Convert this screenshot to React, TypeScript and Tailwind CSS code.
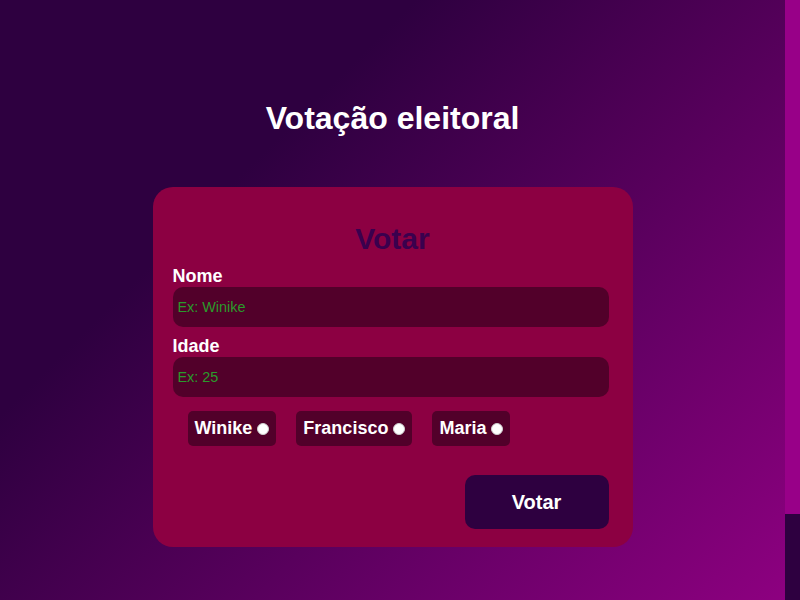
const candidates = ["Winike", "Francisco", "Maria"];

export default function App() {
  return (
    <div
      className="flex h-[600px] w-[800px] overflow-hidden"
      style={{ fontFamily: '"Liberation Sans", Arial, sans-serif' }}
    >
      <main className="flex flex-1 flex-col items-center bg-[linear-gradient(135deg,#2e0040_30%,#8d0080_100%)] pt-[100px]">
        <h1 className="text-[32px] leading-[37px] font-bold text-white">Votação eleitoral</h1>

        <form
          className="mt-[50px] flex w-[480px] flex-col rounded-[20px] bg-[#8c0042] px-[20px] pt-[35px] pb-[18px]"
          onSubmit={(e) => e.preventDefault()}
        >
          <h2 className="text-center text-[30px] leading-[34px] font-bold text-[#3a004e]">Votar</h2>

          <label className="mt-[10px] text-[18px] leading-[21px] font-bold text-white">Nome</label>
          <input
            type="text"
            placeholder="Ex: Winike"
            className="h-[40px] w-[436px] rounded-[10px] bg-[#52002a] px-[5px] text-[14.4px] text-white outline-none placeholder:text-[#2b9a2b]"
          />

          <label className="mt-[9px] text-[18px] leading-[21px] font-bold text-white">Idade</label>
          <input
            type="text"
            placeholder="Ex: 25"
            className="h-[40px] w-[436px] rounded-[10px] bg-[#52002a] px-[5px] text-[14.4px] text-white outline-none placeholder:text-[#2b9a2b]"
          />

          <div className="mt-[14px] flex gap-[20px] pl-[15px]">
            {candidates.map((c) => (
              <label
                key={c}
                className="flex h-[35px] items-center gap-[5px] rounded-[5px] bg-[#52002a] pr-[7px] pl-[7px] text-[18px] font-bold text-white"
              >
                {c}
                <span className="h-[12px] w-[12px] rounded-full border border-[#cfcfcf] bg-white" />
              </label>
            ))}
          </div>

          <button
            type="submit"
            className="mt-[29px] mr-[4px] h-[54px] w-[144px] self-end rounded-[10px] bg-[#2e0040] text-[20px] font-bold text-white"
          >
            Votar
          </button>
        </form>
      </main>

      {/* page scrollbar */}
      <div className="flex w-[15px] flex-col bg-[#980088]">
        <div className="mt-auto h-[86px] bg-[#2e0040]" />
      </div>
    </div>
  );
}
